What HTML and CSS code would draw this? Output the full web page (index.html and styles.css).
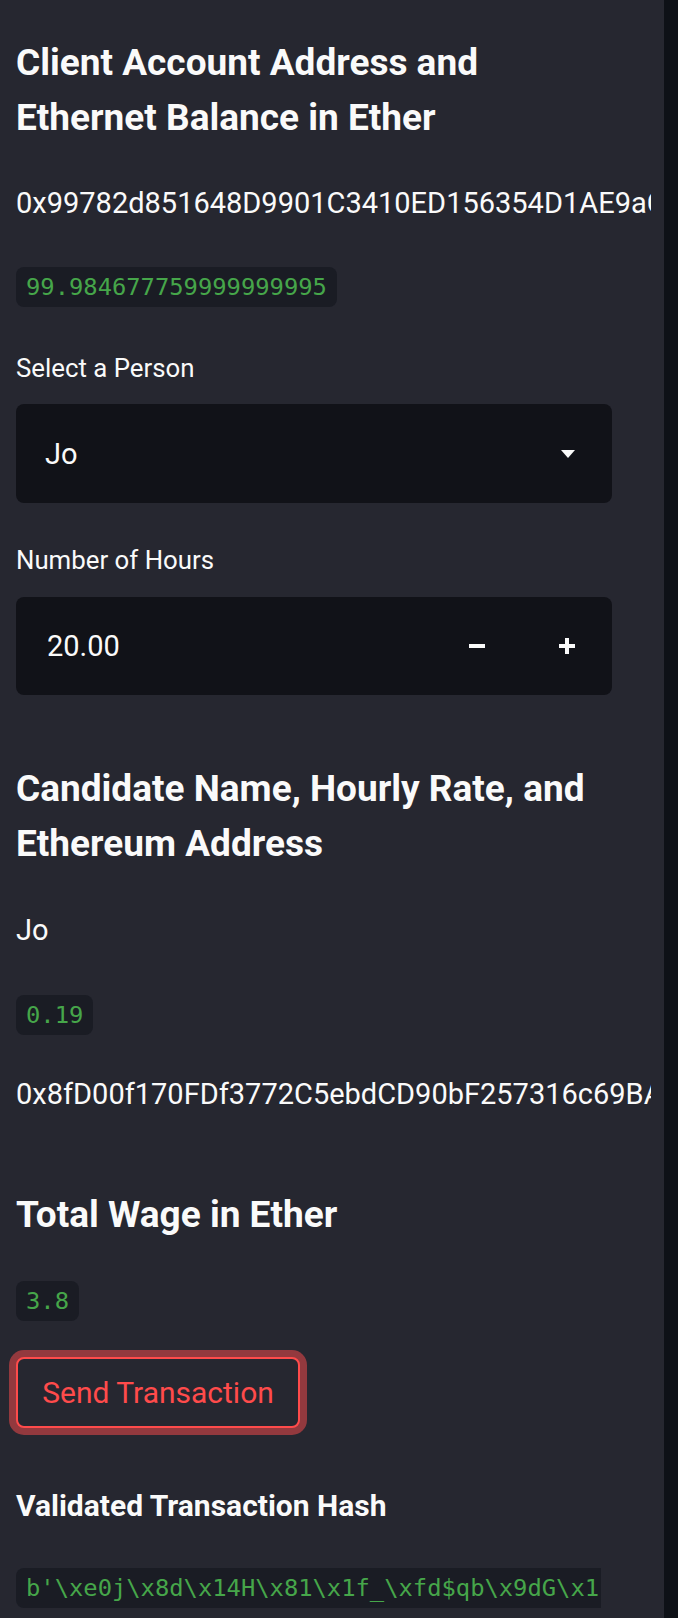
FILE: index.html
```html
<!DOCTYPE html>
<html>
<head>
<meta charset="utf-8">
<link rel="stylesheet" href="styles.css">
</head>
<body>
<div class="sidebar">
  <div class="scroll">
    <div class="block">
      <h2 class="heading h-first">Client Account Address and Ethernet Balance in Ether</h2>
      <p class="text gap-38">0x99782d851648D9901C3410ED156354D1AE9aC</p>
      <div class="code gap-44">99.984677759999999995</div>

      <label class="label gap-45">Select a Person</label>
      <div class="select gap-20">
        <span class="select-value">Jo</span>
        <svg class="caret" width="14" height="8" viewBox="0 0 14 8"><path d="M0 0H14L7 8Z" fill="#fafafa"/></svg>
      </div>

      <label class="label gap-41">Number of Hours</label>
      <div class="number gap-21">
        <span class="number-value">20.00</span>
        <div class="step"><span class="minus"></span></div>
        <div class="step"><span class="plus-h"></span><span class="plus-v"></span></div>
      </div>

      <h2 class="heading gap-66">Candidate Name, Hourly Rate, and Ethereum Address</h2>
      <p class="text gap-39">Jo</p>
      <div class="code gap-45">0.19</div>
      <p class="text gap-39">0x8fD00f170FDf3772C5ebdCD90bF257316c69BA</p>

      <h2 class="heading gap-73">Total Wage in Ether</h2>
      <div class="code gap-39">3.8</div>

      <button class="btn gap-36">Send Transaction</button>

      <p class="text strong gap-58">Validated Transaction Hash</p>
      <div class="code hash gap-42">b'\xe0j\x8d\x14H\x81\x1f_\xfd$qb\x9dG\x1</div>
    </div>
  </div>
</div>
</body>
</html>
```

FILE: styles.css
```css
html, body {
  margin: 0;
  padding: 0;
  background: #0e1117;
}
body {
  width: 678px;
  height: 1618px;
  overflow: hidden;
  font-family: Roboto, "Noto Sans", sans-serif;
  color: #fafafa;
}
.sidebar {
  width: 664px;
  height: 1618px;
  background: #262730;
}
.scroll {
  width: 635px;
  height: 1618px;
  padding-left: 16px;
  overflow: hidden;
}
.block {
  width: 596px;
  display: flex;
  flex-direction: column;
  align-items: flex-start;
}
.heading {
  margin: 0;
  font-size: 37px;
  font-weight: 700;
  line-height: 55px;
  width: 596px;
}
.h-first { margin-top: 35px; }
.text {
  margin: 0;
  font-size: 29px;
  line-height: 40px;
  white-space: nowrap;
}
.strong {
  font-weight: 700;
  font-size: 30px;
}
.code {
  font-family: "DejaVu Sans Mono", "Liberation Mono", monospace;
  font-size: 23.8px;
  line-height: 40px;
  height: 40px;
  padding: 0 10px;
  background: #1a1c24;
  color: #46a64a;
  border-radius: 8px;
  white-space: nowrap;
}
.hash {
  padding-right: 2px;
  border-radius: 8px 0 0 8px;
}
.label {
  font-size: 25.8px;
  line-height: 32px;
  display: block;
}
.select, .number {
  width: 596px;
  background: #111218;
  border-radius: 8px;
  display: flex;
  align-items: center;
  font-size: 29px;
}
.select {
  height: 99px;
  padding-left: 29px;
  padding-right: 37px;
  box-sizing: border-box;
  justify-content: space-between;
}
.number {
  height: 98px;
}
.number-value {
  flex: 1;
  padding-left: 31px;
}
.step {
  width: 90px;
  height: 98px;
  display: flex;
  align-items: center;
  justify-content: center;
  position: relative;
}
.minus {
  width: 16px;
  height: 4px;
  background: #fafafa;
}
.plus-h {
  position: absolute;
  width: 16px;
  height: 4px;
  background: #fafafa;
}
.plus-v {
  width: 4px;
  height: 16px;
  background: #fafafa;
}
.btn {
  font-family: Roboto, "Noto Sans", sans-serif;
  font-size: 30px;
  color: #ff4b4b;
  background: #262730;
  border: 2px solid #ff4b4b;
  border-radius: 8px;
  width: 284px;
  height: 71px;
  padding: 0;
  box-shadow: 0 0 0 7px rgba(255, 75, 75, 0.5);
}
.gap-20 { margin-top: 20px; }
.gap-21 { margin-top: 21px; }
.gap-36 { margin-top: 36px; }
.gap-38 { margin-top: 38px; }
.gap-39 { margin-top: 39px; }
.gap-41 { margin-top: 41px; }
.gap-42 { margin-top: 42px; }
.gap-44 { margin-top: 44px; }
.gap-45 { margin-top: 45px; }
.gap-58 { margin-top: 58px; }
.gap-66 { margin-top: 66px; }
.gap-73 { margin-top: 73px; }
```
